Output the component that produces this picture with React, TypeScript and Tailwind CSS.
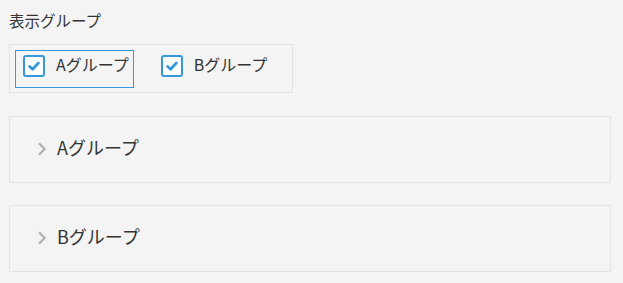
import React from 'react';

const font = { fontFamily: '"Noto Sans CJK JP", "Noto Sans", sans-serif' };

function CheckBox() {
  return (
    <span className="flex h-[22px] w-[22px] shrink-0 items-center justify-center rounded-[3px] border-2 border-[#3498db] bg-white">
      <svg className="h-[14px] w-[14px]" viewBox="0 0 14 14" fill="none">
        <path d="M2.6 7.4 L5.6 10.2 L11.4 4" stroke="#3498db" strokeWidth={2.8} strokeLinecap="round" strokeLinejoin="round" />
      </svg>
    </span>
  );
}

function GroupCheck({ label, focused }: { label: string; focused?: boolean }) {
  return (
    <label
      className={`flex h-[38px] items-center gap-[11px] border pb-[6px] pl-[7px] pr-[4px] ${
        focused ? 'border-[#3498db]' : 'border-transparent'
      }`}
    >
      <CheckBox />
      <span className="-translate-y-[2px] text-[16px] leading-none text-[#333]">{label}</span>
    </label>
  );
}

function Accordion({ label }: { label: string }) {
  return (
    <div className="flex h-[67px] items-center border border-[#e3e3e3] pb-[2px] pl-[27px]">
      <svg className="h-[14px] w-[10px]" viewBox="0 0 10 14" fill="none">
        <path d="M2 1.2 L7.6 7 L2 12.8" stroke="#b0b0b0" strokeWidth={2.2} />
      </svg>
      <span className="ml-[10px] -translate-y-[2px] text-[18px] leading-none text-[#333]">{label}</span>
    </div>
  );
}

export default function App() {
  return (
    <div className="min-h-screen bg-[#f4f4f4] px-[9px] pt-[10px]" style={font}>
      <div className="text-[15.5px] leading-[20px] text-[#333]">表示グループ</div>
      <div className="mt-[14px] flex w-[284px] gap-[19px] border border-[#e3e3e3] p-[5px] pb-[4px]">
        <GroupCheck label="Aグループ" focused />
        <GroupCheck label="Bグループ" />
      </div>
      <div className="mr-[3px] mt-[23px] flex flex-col gap-[22px]">
        <Accordion label="Aグループ" />
        <Accordion label="Bグループ" />
      </div>
    </div>
  );
}
